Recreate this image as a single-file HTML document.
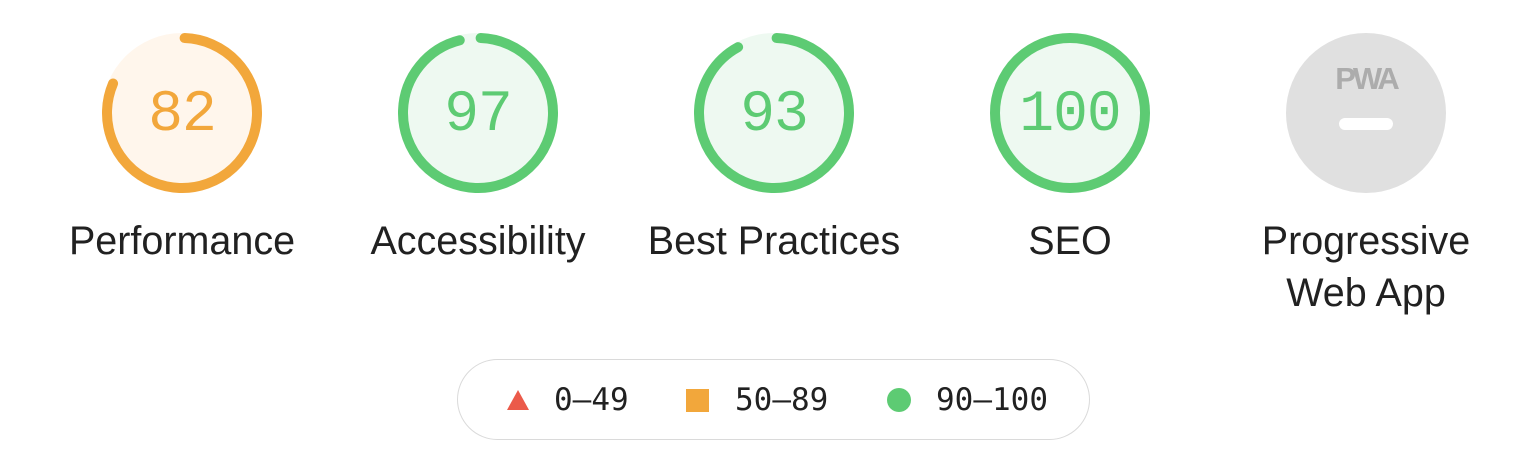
<!DOCTYPE html>
<html><head><meta charset="utf-8"><style>
body{margin:0;width:1520px;height:460px;background:#fff;position:relative;overflow:hidden;font-family:"Liberation Sans",Arial,sans-serif}
.g{position:absolute;top:33px;width:160px;height:160px}
.num{position:absolute;left:0;top:3px;width:160px;height:160px;line-height:160px;text-align:center;font-family:"Liberation Mono","DejaVu Sans Mono",monospace;font-size:58px;letter-spacing:-1px}
.lab{position:absolute;top:215px;width:300px;text-align:center;font-size:39.5px;line-height:52px;color:#212121}
.legend{position:absolute;left:457px;top:359px;width:633px;height:81px;border:1.5px solid #dadada;border-radius:41px;box-sizing:border-box}
.lt{position:absolute;top:378px;font-family:"DejaVu Sans Mono","Liberation Mono",monospace;font-size:31px;line-height:44px;color:#212121}
</style></head><body>

<div class="g" style="left:102px"><svg width="160" height="160"><circle cx="80" cy="80" r="80" fill="#fff6ec"/><circle cx="80" cy="80" r="75" fill="none" stroke="#f2a73b" stroke-width="10" stroke-linecap="round" stroke-dasharray="381 471" transform="rotate(-88 80 80)"/></svg><div class="num" style="color:#f2a73b">82</div></div>
<div class="g" style="left:398px"><svg width="160" height="160"><circle cx="80" cy="80" r="80" fill="#eef9f1"/><circle cx="80" cy="80" r="75" fill="none" stroke="#5dcb73" stroke-width="10" stroke-linecap="round" stroke-dasharray="450 471" transform="rotate(-88 80 80)"/></svg><div class="num" style="color:#5dcb73">97</div></div>
<div class="g" style="left:694px"><svg width="160" height="160"><circle cx="80" cy="80" r="80" fill="#eef9f1"/><circle cx="80" cy="80" r="75" fill="none" stroke="#5dcb73" stroke-width="10" stroke-linecap="round" stroke-dasharray="431 471" transform="rotate(-88 80 80)"/></svg><div class="num" style="color:#5dcb73">93</div></div>
<div class="g" style="left:990px"><svg width="160" height="160"><circle cx="80" cy="80" r="80" fill="#eef9f1"/><circle cx="80" cy="80" r="75" fill="none" stroke="#5dcb73" stroke-width="10"/></svg><div class="num" style="color:#5dcb73">100</div></div>
<div class="g" style="left:1286px"><svg width="160" height="160"><circle cx="80" cy="80" r="80" fill="#e0e0e0"/>
<text x="80" y="56" text-anchor="middle" font-family="Liberation Sans,Arial,sans-serif" font-weight="bold" font-size="31" fill="#acacac" letter-spacing="-3">PWA</text>
<rect x="53" y="85" width="54" height="12" rx="6" fill="#fff"/></svg></div>

<div class="lab" style="left:32px">Performance</div>
<div class="lab" style="left:328px">Accessibility</div>
<div class="lab" style="left:624px">Best Practices</div>
<div class="lab" style="left:920px">SEO</div>
<div class="lab" style="left:1216px">Progressive<br>Web App</div>

<div class="legend"></div>
<svg style="position:absolute;left:506px;top:389px" width="24" height="22"><polygon points="12,1 23,21 1,21" fill="#eb5a4a"/></svg>
<div class="lt" style="left:554px">0–49</div>
<div style="position:absolute;left:686px;top:389px;width:23px;height:23px;background:#f2a73b"></div>
<div class="lt" style="left:735px">50–89</div>
<div style="position:absolute;left:887px;top:388px;width:24px;height:24px;border-radius:50%;background:#5dcb73"></div>
<div class="lt" style="left:936px">90–100</div>
</body></html>
